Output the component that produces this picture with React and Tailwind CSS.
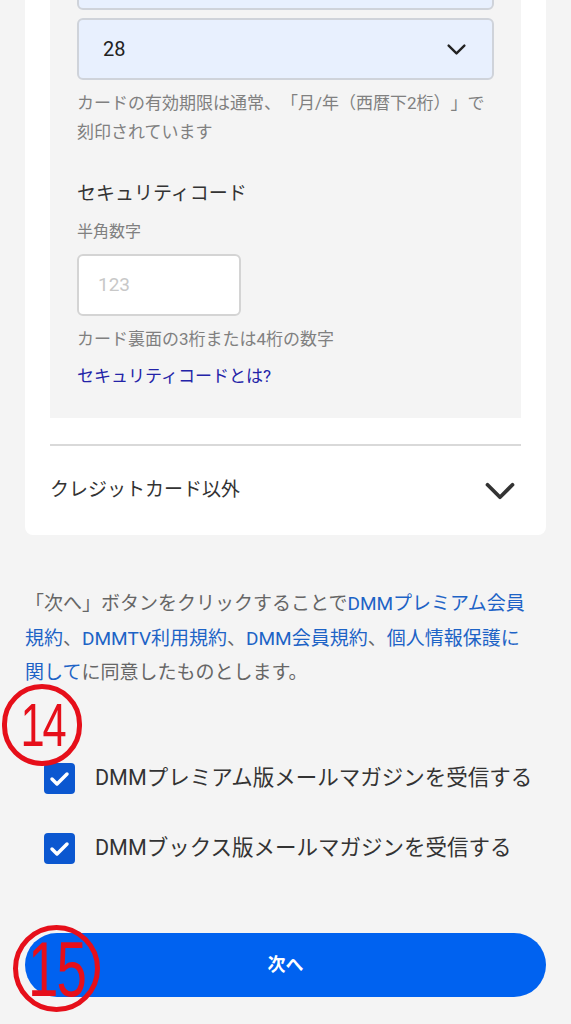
import React from "react";

const Chevron = ({ className }) => (
  <svg viewBox="0 0 24 14" className={className} fill="none">
    <path d="M2 2l10 10 10-10" stroke="currentColor" strokeWidth="3" strokeLinecap="round" strokeLinejoin="round" />
  </svg>
);

const CheckRow = ({ label }) => (
  <div className="flex items-center gap-[20px] pl-[44px]">
    <span className="w-[31px] h-[31px] rounded-[4px] bg-[#0b57d0] flex items-center justify-center shrink-0">
      <svg viewBox="0 0 31 31" className="w-[31px] h-[31px]" fill="none">
        <path d="M8 16l5 5 10-10" stroke="#fff" strokeWidth="3.5" strokeLinecap="round" strokeLinejoin="round" />
      </svg>
    </span>
    <span className="text-[21.5px] leading-[28px] text-[#333]">{label}</span>
  </div>
);

const Marker = ({ num, className, textClass }) => (
  <div className={`absolute rounded-full border-[5px] border-[#e60f1a] flex items-center justify-center ${className}`}>
    <span className={`text-[#e60f1a] font-['Liberation_Sans',sans-serif] scale-x-[0.7] tracking-[-3px] ${textClass}`}>
      {num}
    </span>
  </div>
);

export default function App() {
  return (
    <div className="relative h-[1024px] overflow-hidden bg-[#f4f4f4] font-['Roboto','Noto_Sans_CJK_JP',sans-serif] [text-spacing-trim:space-all]">
      <div className="px-[25px]">
        <div className="bg-white rounded-b-lg px-[25px]">
          {/* credit card panel */}
          <div className="bg-[#f4f4f4] px-[27px] pb-[30px]">
            <div className="-mt-[52px] h-[62px] rounded-md border-2 border-[#cfd3da] bg-[#e8f0fe]" />
            <div className="mt-[8px] h-[62px] rounded-md border-2 border-[#cfd3da] bg-[#e8f0fe] flex items-center justify-between pl-[24px] pr-[26px]">
              <span className="text-[20px] text-[#222]">28</span>
              <Chevron className="w-[19px] h-[11px] text-[#222]" />
            </div>
            <p className="mt-[9px] text-[17px] leading-[29px] text-[#808080]">
              カードの有効期限は通常、「月/年（西暦下2桁）」で
              <br />
              刻印されています
            </p>
            <h3 className="mt-[34px] text-[19px] leading-[26px] text-[#333]">セキュリティコード</h3>
            <p className="mt-[14px] text-[16px] leading-[22px] text-[#808080]">半角数字</p>
            <div className="mt-[11px] w-[164px] h-[62px] rounded-md border-2 border-[#d4d4d4] bg-white flex items-center pl-[19px]">
              <span className="text-[19px] text-[#c8c8c8]">123</span>
            </div>
            <p className="mt-[11px] text-[17px] leading-[24px] text-[#808080]">カード裏面の3桁または4桁の数字</p>
            <a className="block mt-[13px] text-[17px] leading-[24px] text-[#2323a8]">セキュリティコードとは?</a>
          </div>
          <div className="mt-[26px] h-[2px] bg-[#d9d9d9]" />
          <div className="h-[89px] flex items-center justify-between pr-[6px]">
            <span className="text-[19px] text-[#333]">クレジットカード以外</span>
            <Chevron className="w-[30px] h-[18px] text-[#333]" />
          </div>
        </div>
      </div>

      <p className="mt-[52px] px-[25px] text-[19px] leading-[34.5px] text-[#666]">
        「次へ」ボタンをクリックすることで
        <span className="text-[#1d63c6]">
          DMMプレミアム会員
          <br />
          規約
        </span>
        、<span className="text-[#1d63c6]">DMMTV利用規約</span>、
        <span className="text-[#1d63c6]">DMM会員規約</span>、
        <span className="text-[#1d63c6]">
          個人情報保護に
          <br />
          関して
        </span>
        に同意したものとします。
      </p>

      <div className="mt-[72px]">
        <CheckRow label="DMMプレミアム版メールマガジンを受信する" />
      </div>
      <div className="mt-[39px]">
        <CheckRow label="DMMブックス版メールマガジンを受信する" />
      </div>

      <div className="mt-[69px] mx-[25px] h-[64px] rounded-full bg-[#0062f0] flex items-center justify-center">
        <span className="text-white text-[18px] font-bold">次へ</span>
      </div>

      <Marker num="14" className="left-[2px] top-[684px] w-[80px] h-[82px]" textClass="text-[62px] leading-none" />
      <Marker num="15" className="left-[13px] top-[925px] w-[87px] h-[87px]" textClass="text-[78px] leading-none" />
    </div>
  );
}
